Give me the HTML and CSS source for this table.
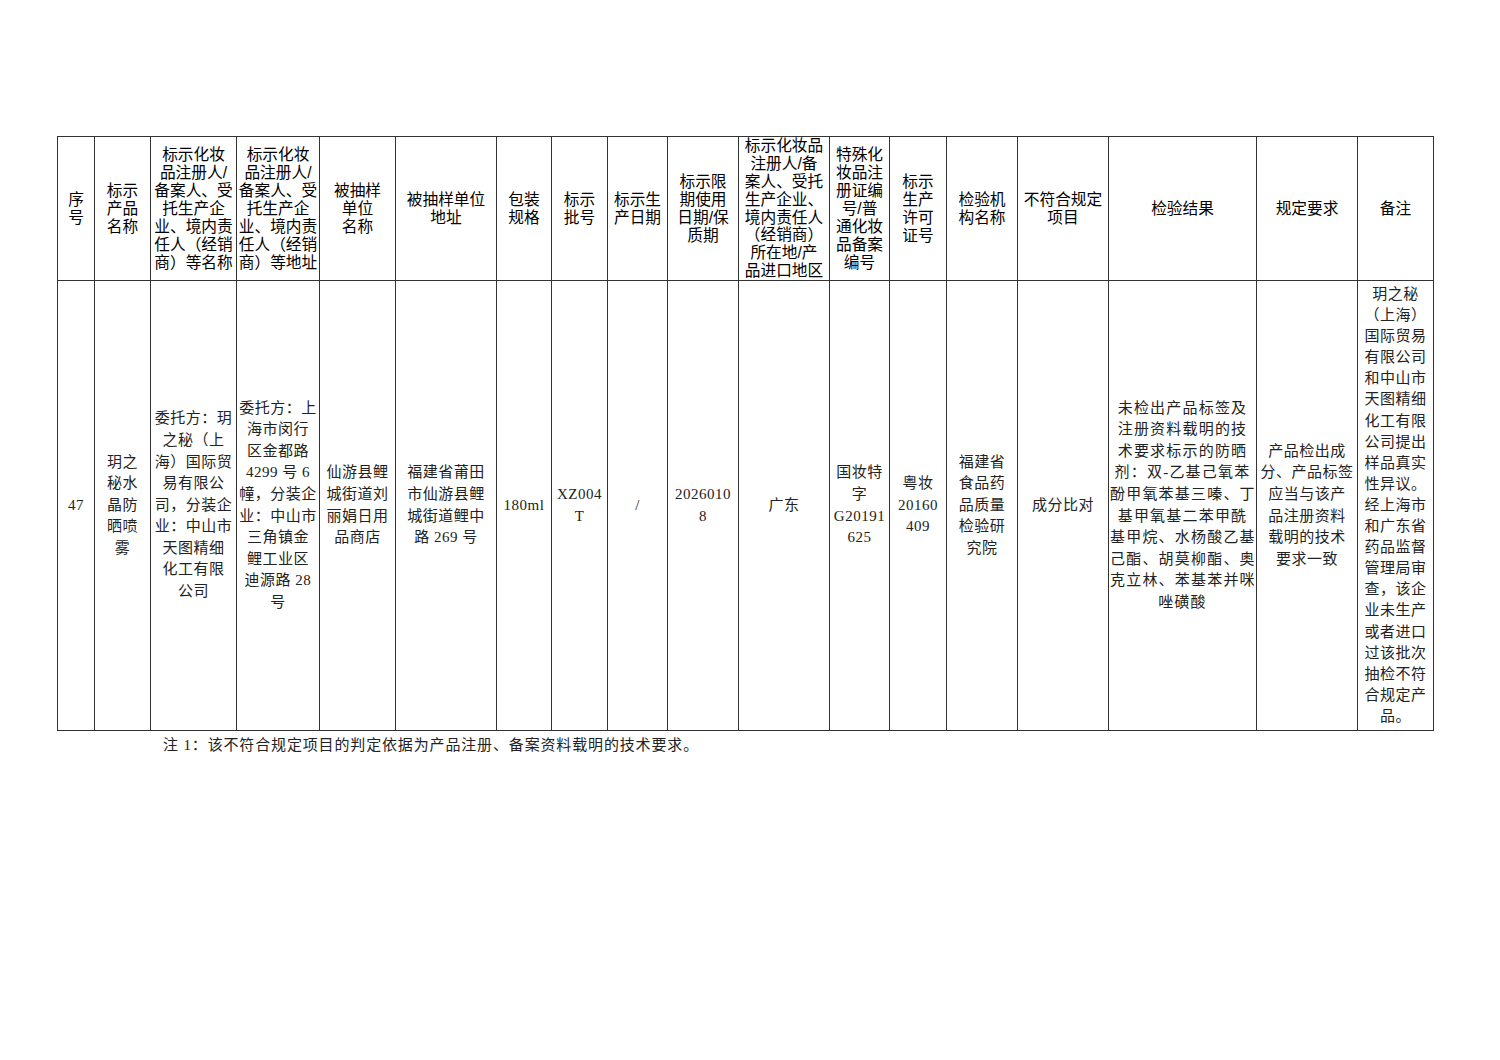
FILE: index.html
```html
<!DOCTYPE html>
<html lang="zh-CN">
<head>
<meta charset="utf-8">
<title>不符合规定化妆品</title>
<link rel="stylesheet" href="styles.css">
</head>
<body>
<div class="page">
<table class="sheet">
<colgroup>
<col class="c1"><col class="c2"><col class="c3"><col class="c4"><col class="c5"><col class="c6"><col class="c7"><col class="c8"><col class="c9"><col class="c10"><col class="c11"><col class="c12"><col class="c13"><col class="c14"><col class="c15"><col class="c16"><col class="c17"><col class="c18">
</colgroup>
<thead>
<tr class="head">
<th>序<br>号</th>
<th>标示<br>产品<br>名称</th>
<th>标示化妆<br>品注册人/<br>备案人、受<br>托生产企<br>业、境内责<br>任人（经销<br>商）等名称</th>
<th>标示化妆<br>品注册人/<br>备案人、受<br>托生产企<br>业、境内责<br>任人（经销<br>商）等地址</th>
<th>被抽样<br>单位<br>名称</th>
<th>被抽样单位<br>地址</th>
<th>包装<br>规格</th>
<th>标示<br>批号</th>
<th>标示生<br>产日期</th>
<th>标示限<br>期使用<br>日期/保<br>质期</th>
<th class="tight">标示化妆品<br>注册人/备<br>案人、受托<br>生产企业、<br>境内责任人<br>（经销商）<br>所在地/产<br>品进口地区</th>
<th>特殊化<br>妆品注<br>册证编<br>号/普<br>通化妆<br>品备案<br>编号</th>
<th>标示<br>生产<br>许可<br>证号</th>
<th>检验机<br>构名称</th>
<th>不符合规定<br>项目</th>
<th>检验结果</th>
<th>规定要求</th>
<th>备注</th>
</tr>
</thead>
<tbody>
<tr class="data">
<td>47</td>
<td>玥之<br>秘水<br>晶防<br>晒喷<br>雾</td>
<td>委托方：玥<br>之秘（上<br>海）国际贸<br>易有限公<br>司，分装企<br>业：中山市<br>天图精细<br>化工有限<br>公司</td>
<td>委托方：上<br>海市闵行<br>区金都路<br>4299 号 6<br>幢，分装企<br>业：中山市<br>三角镇金<br>鲤工业区<br>迪源路 28<br>号</td>
<td>仙游县鲤<br>城街道刘<br>丽娟日用<br>品商店</td>
<td>福建省莆田<br>市仙游县鲤<br>城街道鲤中<br>路 269 号</td>
<td>180ml</td>
<td>XZ004<br>T</td>
<td>/</td>
<td>2026010<br>8</td>
<td>广东</td>
<td>国妆特<br>字<br>G20191<br>625</td>
<td>粤妆<br>20160<br>409</td>
<td>福建省<br>食品药<br>品质量<br>检验研<br>究院</td>
<td>成分比对</td>
<td class="wide">未检出产品标签及<br>注册资料载明的技<br>术要求标示的防晒<br>剂：双-乙基己氧苯<br>酚甲氧苯基三嗪、丁<br>基甲氧基二苯甲酰<br>基甲烷、水杨酸乙基<br>己酯、胡莫柳酯、奥<br>克立林、苯基苯并咪<br>唑磺酸</td>
<td>产品检出成<br>分、产品标签<br>应当与该产<br>品注册资料<br>载明的技术<br>要求一致</td>
<td class="note">玥之秘<br>（上海）<br>国际贸易<br>有限公司<br>和中山市<br>天图精细<br>化工有限<br>公司提出<br>样品真实<br>性异议。<br>经上海市<br>和广东省<br>药品监督<br>管理局审<br>查，该企<br>业未生产<br>或者进口<br>过该批次<br>抽检不符<br>合规定产<br>品。</td>
</tr>
</tbody>
</table>
<p class="footnote">注 1：该不符合规定项目的判定依据为产品注册、备案资料载明的技术要求。</p>
</div>
</body>
</html>
```
FILE: styles.css
```css
html, body {
  margin: 0;
  padding: 0;
  background: #ffffff;
}
.page {
  padding: 136px 0 0 57px;
}
.sheet {
  border-collapse: collapse;
  table-layout: fixed;
  width: 1376px;
  color: #111;
}
.c1 { width: 37px; }
.c2 { width: 56px; }
.c3 { width: 86px; }
.c4 { width: 83px; }
.c5 { width: 76px; }
.c6 { width: 101px; }
.c7 { width: 55px; }
.c8 { width: 56px; }
.c9 { width: 60px; }
.c10 { width: 71px; }
.c11 { width: 91px; }
.c12 { width: 60px; }
.c13 { width: 57px; }
.c14 { width: 71px; }
.c15 { width: 91px; }
.c16 { width: 148px; }
.c17 { width: 101px; }
.c18 { width: 76px; }
.sheet th, .sheet td {
  border: 1px solid #333;
  padding: 0 1px;
  text-align: center;
  vertical-align: middle;
  overflow: hidden;
  white-space: nowrap;
}
.head {
  height: 144px;
}
.head th {
  font-family: "Liberation Sans", "Noto Sans CJK SC", sans-serif;
  font-size: 15.7px;
  font-weight: 400;
  line-height: 18px;
  color: #000;
}
.head th.tight {
  line-height: 17.8px;
}
.data {
  height: 450px;
}
.data td {
  font-family: "Liberation Serif", "Noto Sans CJK SC", serif;
  font-size: 15px;
  line-height: 21.6px;
  color: #222;
  letter-spacing: 0.5px;
}
.data td.wide {
  letter-spacing: 1.2px;
}
.data td.note {
  line-height: 21.1px;
  padding: 0;
}
.footnote {
  margin: 4px 0 0 106px;
  font-family: "Liberation Serif", "Noto Sans CJK SC", serif;
  font-size: 15px;
  line-height: 21px;
  color: #222;
  letter-spacing: 0.85px;
}
```
